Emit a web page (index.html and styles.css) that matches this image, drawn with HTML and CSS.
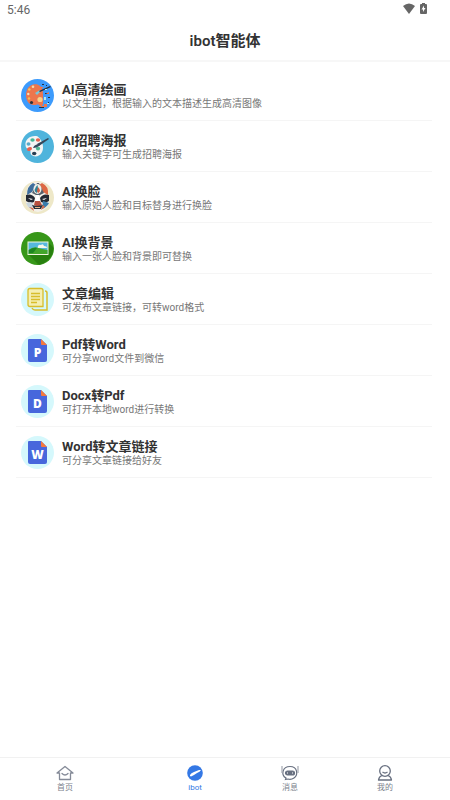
FILE: index.html
```html
<!DOCTYPE html>
<html lang="zh-CN">
<head>
    <meta charset="UTF-8">
    <meta name="viewport" content="width=device-width, initial-scale=1.0">
    <title>ibot智能体</title>
    <link rel="stylesheet" href="styles.css">
</head>
<body>
    <div class="status-bar">
        <span>5:46</span>
        <div class="status-icons">
            <svg width="12" height="11" viewBox="0 0 12 11"><path d="M0 3Q6-2 12 3L6 11Z" fill="#666"/></svg>
            <svg width="7" height="11" viewBox="0 0 7 11"><path d="M2 0h3v1h1q1 0 1 1v8q0 1-1 1H1q-1 0-1-1V2q0-1 1-1h1Z" fill="#666"/><path d="M4 2.500L1.500 6.500h1.500v2.500l2.500-4H4Z" fill="#fff"/></svg>
        </div>
    </div>

    <header class="header">
        <h1>ibot智能体</h1>
    </header>

    <main class="list">
        <a class="item" href="#">
            <svg class="item-icon" viewBox="0 0 33 33">
                <circle cx="16.500" cy="16.500" r="16.500" fill="#3d9bfc"/>
                <path d="M12 5.500C8 6 5 11 5 16c0 6 3 10 8 10 3 0 4-1 5 0 1 1 2 2 3 1 2-2 1-7 1-10 0-4 0-8-3-10-2-2-4-2-7-1.500Z" fill="#ed764d"/>
                <circle cx="12" cy="7.800" r="1.300" fill="#f7d9a5"/>
                <circle cx="8.300" cy="10.500" r="1.200" fill="#f8c65b"/>
                <circle cx="7.300" cy="15" r="1.200" fill="#f4dfbd"/>
                <circle cx="8" cy="19.500" r="1.200" fill="#f5bd4f"/>
                <circle cx="10.500" cy="23.500" r="1.600" fill="#29323c"/>
                <circle cx="19" cy="20.500" r="2.600" fill="#f7d28c"/>
                <path d="M14 14l5-3 1 1-4 4Z" fill="#76c8dc"/>
                <path d="M18 12l11-5 1 1-11 5Z" fill="#26303e"/>
                <path d="M21 5h2v1h-2ZM25 6h1v1h-1ZM24 14h4v1h-4ZM27 18h2v1h-2ZM18 28h5v1h-5ZM27 23h1v2h-1Z" fill="#263040"/>
                <path d="M20 8h2v1h-2ZM25 15l3-2v2ZM23 25h3v3h-3ZM20 27h3v1h-3Z" fill="#ed764d"/>
                <path d="M23 18h2v3h-2ZM26 24h2v1h-2ZM24 10h2v1h-2Z" fill="#b9e8ed"/>
            </svg>
            <div class="item-text">
                <h2>AI高清绘画</h2>
                <p>以文生图，根据输入的文本描述生成高清图像</p>
            </div>
        </a>
        <a class="item" href="#">
            <svg class="item-icon" viewBox="0 0 33 33">
                <circle cx="16.500" cy="16.500" r="16.500" fill="#4fb4dc"/>
                <path d="M14 6C8 6 4 10 4.500 15c0 3 2 4 4 5 2 1 0 3 2 5 3 2.500 8 1.500 10-2 2-3 2-8 0-12-2-3-3-5-6.500-5Z" fill="#f4f5f5"/>
                <ellipse cx="11.500" cy="10" rx="2.200" ry="1.800" fill="#43b997"/>
                <ellipse cx="17" cy="10" rx="2.200" ry="1.700" fill="#e8614e"/>
                <ellipse cx="7.500" cy="14" rx="2" ry="1.700" fill="#5aaaca"/>
                <ellipse cx="8.500" cy="19" rx="2.600" ry="1.800" fill="#e8614e" transform="rotate(-20 8.500 19)"/>
                <circle cx="17" cy="18.500" r="2.100" fill="#4fb995"/>
                <ellipse cx="13.200" cy="23.500" rx="2.200" ry="1.700" fill="#283d52"/>
                <path d="M12 18c1-3 4-4 6-4l1 1c-2 2-4 3-7 3Z" fill="#364b60"/>
                <path d="M16 14l11-6 1 1-10 7Z" fill="#34485b"/>
            </svg>
            <div class="item-text">
                <h2>AI招聘海报</h2>
                <p>输入关键字可生成招聘海报</p>
            </div>
        </a>
        <a class="item" href="#">
            <svg class="item-icon" viewBox="0 0 33 33">
                <circle cx="16.500" cy="16.500" r="16.500" fill="#eee8c8"/>
                <path d="M6 14Q5 5 11 2q5-2 11 0 6 3 5 12l1 8q-3 8-11 9-9-1-12-9Z" fill="#f4f1ea"/>
                <path d="M6 14Q6 5 12 2l3 2-4 7Z" fill="#3f6f9d"/>
                <path d="M27 14Q28 5 21 2l-3 2 4 7Z" fill="#dd6843"/>
                <path d="M11 12l5-10h2l5 10-6 3Z" fill="#56616d"/>
                <ellipse cx="16.500" cy="8" rx="4" ry="5" fill="#f1efe6"/>
                <path d="M16.500 4q-5 5-1 8l2-2Z" fill="#318397"/>
                <path d="M17 6q4 4 0 6l-1-2Z" fill="#d45c43"/>
                <path d="M5 14q6-2 9 3l-1 4q-4 2-8-1ZM28 14q-6-2-9 3l1 4q4 2 8-1Z" fill="#252a34"/>
                <path d="M7 17l5 1-2 1ZM26 17l-5 1 2 1Z" fill="#fff"/>
                <path d="M5 22l5-1 2 2-1 6q-4-2-6-7Z" fill="#c9d6df"/>
                <path d="M28 22l-6-2-1 8q5-2 7-6Z" fill="#397cac"/>
                <path d="M15 14h3l1 7h-5Z" fill="#fff"/>
                <path d="M14 20h5l2 4-4 2-4-2Z" fill="#b9503e"/>
                <path d="M11 24l5 1 6-1-2 4h-7Z" fill="#2d3139"/>
                <path d="M14 26h5v1h-5Z" fill="#e8b58c"/>
                <path d="M8 26l4 1 1 3ZM22 24l2 2-4 3Z" fill="#dd6843"/>
            </svg>
            <div class="item-text">
                <h2>AI换脸</h2>
                <p>输入原始人脸和目标替身进行换脸</p>
            </div>
        </a>
        <a class="item" href="#">
            <svg class="item-icon" viewBox="0 0 33 33">
                <circle cx="16.500" cy="16.500" r="16.500" fill="#379719"/>
                <path d="M27 10l5 5q1 8-5 13-4 4-9 5L7 22Z" fill="#28800f"/>
                <rect x="7" y="10" width="20" height="12.500" fill="#56b8dd" stroke="#f1f5dc"/>
                <path d="M7.500 18q5-4 10-2l4 1 5 1v4h-19Z" fill="#43a62b"/>
                <path d="M8 18q5-3 8-2l-4 5H8Z" fill="#1c8620"/>
                <path d="M17 14q1-2 3-1 2-2 3 1 3 0 3 2h-8q-2 0-1-2Z" fill="#f5f7e9"/>
            </svg>
            <div class="item-text">
                <h2>AI换背景</h2>
                <p>输入一张人脸和背景即可替换</p>
            </div>
        </a>
        <a class="item" href="#">
            <svg class="item-icon" viewBox="0 0 33 33">
                <circle cx="16.500" cy="16.500" r="16.500" fill="#d5f8fc"/>
                <path d="M9 5.500h11q2 0 2 2v16H9q-2 0-2-2v-14q0-2 2-2Z" fill="#f5efb2" stroke="#d8bd2b" stroke-width="1.300"/>
                <path d="M24 8q2 0 2 2v17H14q-2 0-3-2" fill="none" stroke="#d8bd2b" stroke-width="1.500"/>
                <path d="M10 10.500h9M10 13.500h9M10 16.500h9M10 19.500h6" stroke="#d8bd2b" stroke-width="1.300"/>
            </svg>
            <div class="item-text">
                <h2>文章编辑</h2>
                <p>可发布文章链接，可转word格式</p>
            </div>
        </a>
        <a class="item" href="#">
            <svg class="item-icon" viewBox="0 0 33 33">
                <circle cx="16.500" cy="16.500" r="16.500" fill="#d5f8fc"/>
                <path d="M8 5h12l6 6v15q0 2-2 2H9q-2 0-2-2V6q0-1 1-1Z" fill="#4767dc"/>
                <path d="M20 5l6 6h-5q-1 0-1-1Z" fill="#f5793b"/>
                <text class="doc-letter" x="16.500" y="23">P</text>
            </svg>
            <div class="item-text">
                <h2>Pdf转Word</h2>
                <p>可分享word文件到微信</p>
            </div>
        </a>
        <a class="item" href="#">
            <svg class="item-icon" viewBox="0 0 33 33">
                <circle cx="16.500" cy="16.500" r="16.500" fill="#d5f8fc"/>
                <path d="M8 5h12l6 6v15q0 2-2 2H9q-2 0-2-2V6q0-1 1-1Z" fill="#4767dc"/>
                <path d="M20 5l6 6h-5q-1 0-1-1Z" fill="#f5793b"/>
                <text class="doc-letter" x="16.500" y="23">D</text>
            </svg>
            <div class="item-text">
                <h2>Docx转Pdf</h2>
                <p>可打开本地word进行转换</p>
            </div>
        </a>
        <a class="item" href="#">
            <svg class="item-icon" viewBox="0 0 33 33">
                <circle cx="16.500" cy="16.500" r="16.500" fill="#d5f8fc"/>
                <path d="M8 5h12l6 6v15q0 2-2 2H9q-2 0-2-2V6q0-1 1-1Z" fill="#4767dc"/>
                <path d="M20 5l6 6h-5q-1 0-1-1Z" fill="#f5793b"/>
                <text class="doc-letter" x="16.500" y="23">W</text>
            </svg>
            <div class="item-text">
                <h2>Word转文章链接</h2>
                <p>可分享文章链接给好友</p>
            </div>
        </a>
    </main>

    <nav class="tab-bar">
        <a class="tab" href="#">
            <svg width="18" height="16" viewBox="0 0 18 16" fill="none" stroke="#858b98" stroke-width="1.300" stroke-linejoin="round"><path d="M3.500 8H1l8-6.500L17 8h-2.500v6.500h-11Z"/><path d="M6 8.500q3 3 6 0" stroke-linecap="round"/></svg>
            <span>首页</span>
        </a>
        <a class="tab active" href="#">
            <svg width="16" height="16" viewBox="0 0 16 16"><circle cx="8" cy="8" r="7.800" fill="#3478e5"/><path d="M3 10q1-2 4-3l5-2h2q-1 2-4 3l-3 2-3 1.500-1-.5Z" fill="#fff"/></svg>
            <span>ibot</span>
        </a>
        <a class="tab" href="#">
            <svg width="18" height="16" viewBox="0 0 18 16" fill="none" stroke="#687080" stroke-width="1.200"><path d="M4.500 14.500L5 13C-.5 10 1.500 1.500 9 1.500S17.500 10 13 13q-3 2-6 1Z"/><rect x="4.500" y="6" width="9" height="4" rx="2" fill="#687080"/><path d="M1 1v7M17 1v7" stroke="#a4a8b1"/><path d="M6 8h1M11 8h1" stroke="#fff"/></svg>
            <span>消息</span>
        </a>
        <a class="tab" href="#">
            <svg width="16" height="16" viewBox="0 0 16 16" fill="none" stroke="#687080" stroke-width="1.300" stroke-linejoin="round"><circle cx="8" cy="6" r="5.300"/><path d="M5 10.500q-3 1-3.500 4.500h13q-.5-3.500-3.500-4.500M5.500 7q2.500 2 5 0"/></svg>
            <span>我的</span>
        </a>
    </nav>
</body>
</html>
```
FILE: styles.css
```css
* {
    box-sizing: border-box;
}
body {
    display: flex;
    flex-direction: column;
    min-height: 100vh;
    margin: 0;
    background-color: #fff;
    color: #333;
    font-family: Roboto, "Noto Sans CJK SC", sans-serif;
}
a {
    color: inherit;
    text-decoration: none;
}
h1, h2, p {
    margin: 0;
}
svg {
    display: block;
}
.status-bar {
    display: flex;
    justify-content: space-between;
    height: 20px;
    padding: 3px 23px 0 7px;
    color: #666;
    font-size: 12px;
    line-height: 14px;
}
.status-icons {
    display: flex;
    gap: 5px;
}
.header {
    height: 42px;
    border-bottom: 2px solid #f7f7f7;
    text-align: center;
}
.header h1 {
    font-size: 15px;
    font-weight: 600;
    line-height: 42px;
}
.list {
    flex: 1;
    padding: 8px 18px 0 16px;
}
.item {
    display: flex;
    align-items: center;
    gap: 8px;
    height: 51px;
    padding-left: 5px;
    border-bottom: 1px solid #f5f5f5;
}
.item-icon {
    width: 33px;
    height: 33px;
}
.item-text {
    padding-top: 1px;
}
.item-text h2 {
    font-size: 13px;
    font-weight: 700;
    line-height: 15px;
}
.item-text p {
    color: #777;
    font-size: 10px;
    line-height: 13px;
}
.doc-letter {
    fill: #fff;
    font-family: "Open Sans", sans-serif;
    font-size: 12px;
    font-weight: 800;
    text-anchor: middle;
}
.tab-bar {
    display: grid;
    grid-template-columns: 13fr 13fr 6fr 13fr;
    height: 43px;
    padding-top: 7px;
    border-top: 1px solid #f1f1f1;
}
.tab {
    display: flex;
    flex-direction: column;
    align-items: center;
    color: #7b818c;
    font-size: 8px;
    line-height: 13px;
}
.active {
    color: #3478e5;
}
```
